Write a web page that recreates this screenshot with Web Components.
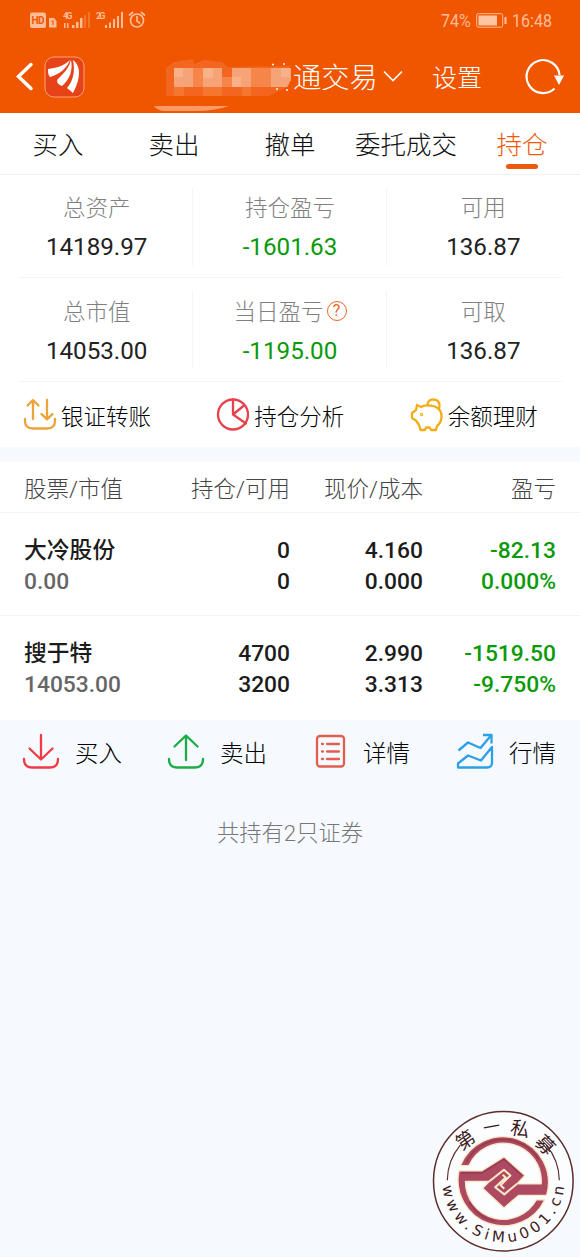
<!DOCTYPE html>
<html lang="zh-CN">
<head>
<meta charset="utf-8">
<title>持仓</title>
<style>
  body {
    margin: 0;
    background: #f6faff;
    font-family: Roboto, "Noto Sans CJK SC", sans-serif;
    color: #222;
  }
</style>
</head>
<body>
<trade-app></trade-app>

<script>
const ICONS = {
  transfer: `<g stroke="#eba33a"><path d="M9 20V1.500M3.500 6.500L9 1.200L14.500 6.500M23 1V20M17.500 15L23 20.300L28.500 15"/><path d="M1 20V22C1 27 4 29.500 9 29.500H23C28 29.500 31 27 31 22V20"/></g>`,
  pie: `<g stroke="#e8424e"><circle cx="16" cy="15.500" r="15"/><path d="M16 .500V15.500L29 24.500M16 15.500L27 6.500"/></g>`,
  pig: `<g stroke="#f3ad14"><path d="M16.500 6C16.500 2.500 19 .500 22 .500C26 .500 28.500 3 28.500 7C28.500 8.500 28 9.500 27.500 10"/><path d="M6 6L10 8C14 5.500 20 6.500 24 7.500C29 9.500 31 14 30.500 19C30 23 28 25.500 26 27L25 31H20L18.500 28.500H15L14 31H9.500L8 26L5 21.500L1 19V14L5 11Z"/><circle cx="10.500" cy="15.500" r=".5"/></g>`,
  buy: `<g stroke="#f03a45"><path d="M18 1V25M6.500 14.500L18 25.500L29.500 14.500"/><path d="M1 25C1 31 4 33.500 9 33.500H27C32 33.500 35 31 35 25"/></g>`,
  sell: `<g stroke="#1cac45"><path d="M18 26V2M6.500 12.500L18 1.500L29.500 12.500"/><path d="M1 25C1 31 4 33.500 9 33.500H27C32 33.500 35 31 35 25"/></g>`,
  detail: `<g stroke="#e25f50"><rect x="4" y="2" width="27" height="30.500" rx="3"/><path d="M9 10h1M14 10H26M9 17.500h1M14 17.500H26M9 25h1M14 25H26"/></g>`,
  quote: `<g stroke="#2ba0e8" stroke-linecap="butt"><path d="M.500 16.500L10 8.500L22.500 14L33 1.500M25 1H33.500V9.500"/><path d="M34 13L23 26.500L10 21.500L0 29.500V33.500H29C32.500 33.500 34 32 34 28.500Z"/></g>`
};

class TradeIcon extends HTMLElement {
  constructor() {
    super();
    this.attachShadow({ mode: "open" });
  }
  connectedCallback() {
    const size = this.getAttribute("size") || 32;
    this.shadowRoot.innerHTML = `
      <style>
        :host { display: block; flex: none; }
        svg { display: block; overflow: visible; fill: none; stroke-width: 2.3; stroke-linecap: round; stroke-linejoin: round; }
      </style>
      <svg width="${size}" height="${size}" viewBox="0 0 ${size} ${size}">${ICONS[this.getAttribute("name")]}</svg>`;
  }
}
customElements.define("trade-icon", TradeIcon);

class StatusBar extends HTMLElement {
  constructor() {
    super();
    this.attachShadow({ mode: "open" }).innerHTML = `
      <style>
        :host { display: flex; justify-content: space-between; height: 42px; padding: 0 26px 0 30px; color: #ffbd98; }
        svg { display: block; }
        .right { display: flex; font-size: 18px; line-height: 42px; }
        .pct { width: 35px; }
        .time { width: 42px; margin-left: 4px; }
        .right span span { display: inline-block; transform: scaleX(.89); transform-origin: 0 50%; }
        .signal { font: 700 9px "Roboto", sans-serif; }
      </style>
      <svg width="120" height="42" viewBox="0 0 120 42" fill="#ffbd98">
        <rect x="0" y="12.500" width="16" height="15.500" rx="2"/>
        <text x="1.500" y="24" font-size="10" font-weight="700" fill="#f05600" textLength="13">HD</text>
        <path d="M19 18h5l2.500 3v6.500h-7.500z"/>
        <path d="M21.500 21h1.500v4" fill="none" stroke="#f05600" stroke-width="1.200"/>
        <g class="signal">
          <text x="33" y="18.500" textLength="9.500">4G</text>
          <text x="66" y="18.500" textLength="9.500">2G</text>
        </g>
        <path d="M34 23h1.500v5H34zM37 23h1.500v5H37zM42 25h2.500v3H42zM46 22h2.500v6H46zM50 18h2.500v10H50z"/>
        <path d="M54 15h2v13h-2zM58 12h2v16h-2z" opacity=".3"/>
        <path d="M75 25h2v3h-2zM79 22.500h2v5.500h-2zM83 19h2v9h-2zM87 16h2v12h-2zM91 12h2v16h-2z"/>
        <g fill="none" stroke="#ffbd98" stroke-width="1.700" stroke-linecap="round">
          <circle cx="107" cy="20.500" r="6.500"/><path d="M107 16.500v4.500l2.500 2M99.500 15l3-2.500M114.500 15l-3-2.500"/>
        </g>
      </svg>
      <div class="right">
        <span class="pct"><span>74%</span></span>
        <svg width="32" height="42" viewBox="0 0 32 42">
          <rect x=".700" y="13.700" width="26" height="13.500" rx="1.500" fill="none" stroke="#ffbd98"/>
          <path d="M2.500 15.500h18.500v10H2.500zM28.500 17h2v7h-2z" fill="#ffc5a3"/>
        </svg>
        <span class="time"><span>16:48</span></span>
      </div>`;
  }
}
customElements.define("status-bar", StatusBar);

class TradeHeader extends HTMLElement {
  constructor() {
    super();
    this.attachShadow({ mode: "open" }).innerHTML = `
      <style>
        :host { display: block; height: 113px; background: #f05600; color: #fff; }
        nav { display: flex; align-items: center; height: 71px; font-weight: 300; }
        svg { display: block; flex: none; }
        .back { margin: -2px 0 0 15px; }
        .logo { margin: -2px 0 0 10px; }
        .mask { margin-left: 66px; }
        .title { font-size: 28.300px; line-height: 70px; width: 86px; margin-top: 2px; white-space: nowrap; }
        .arrow { margin: -2px 0 0 4px; }
        .set { font-size: 25px; line-height: 70px; margin: 2px 0 0 29px; width: 50px; white-space: nowrap; }
        .refresh { margin-left: 41px; }
      </style>
      <status-bar></status-bar>
      <nav>
        <svg class="back" width="19" height="30" viewBox="0 0 19 30"><path d="M16 2.500L3.500 14.500L16 26.500" fill="none" stroke="#fff" stroke-width="3.500" stroke-linecap="round"/></svg>
        <svg class="logo" width="41" height="42" viewBox="0 0 41 42">
          <rect x="1" y="1" width="39" height="40" rx="9" fill="#e64418" stroke="#ffa276"/>
          <path d="M4 13C12 12 20 10 26 4C23 12 16 18 6 21C4 19 4 16 4 13Z" fill="#fff"/>
          <path d="M13 25C13 22 24 16 27 4C29 14 26 23 18 30C15 29 13 27 13 25Z" fill="#fff"/>
          <path d="M29 4C36 9 38 20 29 37L23 32C30 24 31 14 29 4Z" fill="#fff"/>
        </svg>
        <svg class="mask" width="142" height="71" viewBox="151 42 142 71">
          <path d="M166 68l8-6 19-3 1 5 10-4 18 2 6 5 62-1-1 20-20 10H166z" fill="#f3661f"/>
          <path d="M174 68h19v19h-19zM203 68h19v19h-19zM232 68h19v19h-19zM271 68h20v12l-4 7h-16z" fill="#f7a378"/>
          <path d="M193 68h10v19h-10zM222 77h10v10h-10zM251 68h20v19h-20z" fill="#f58549"/>
          <path d="M203 68h10v10h-10zM232 77h9v10h-9zM174 68h9v9h-9zM281 68h9v9h-9z" fill="#f9b18a"/>
          <path d="M174 87h10v9h-10zM203 87h19v9h-19zM242 87h9v9h-9z" fill="#f4762f"/>
          <path d="M154 106H229Q215 111 195 111H163Q157 110 154 106Z" fill="#fa9a65"/>
          <path d="M272 64.500h2M283 64h2M276 89h2M286 90h2" stroke="#fff" stroke-width="1.500"/>
        </svg>
        <span class="title">通交易</span>
        <svg class="arrow" width="20" height="14" viewBox="0 0 20 14"><path d="M1 1.500L10 10.500L19 1.500" fill="none" stroke="#fff" stroke-width="1.600"/></svg>
        <span class="set">设置</span>
        <svg class="refresh" width="42" height="40" viewBox="0 0 42 40">
          <path d="M31.500 30.500A16.500 16.500 0 1 1 36.500 17" fill="none" stroke="#fff" stroke-width="2.200"/>
          <path d="M31 17.500H41L36 27Z" fill="#fff"/>
        </svg>
      </nav>`;
  }
}
customElements.define("trade-header", TradeHeader);

class TradeTab extends HTMLElement {
  constructor() {
    super();
    this.attachShadow({ mode: "open" }).innerHTML = `
      <style>
        :host { display: flex; flex-direction: column; align-items: center; width: 116px; font-size: 25.500px; font-weight: 300; line-height: 52px; padding-top: 6px; box-sizing: border-box; white-space: nowrap; color: #111; }
        :host([active]) { color: #ec5a10; }
        i { display: none; width: 32px; height: 5px; border-radius: 3px; margin-top: -7px; background: #ec5a10; }
        :host([active]) i { display: block; }
      </style>
      <slot></slot><i></i>`;
  }
}
customElements.define("trade-tab", TradeTab);

class StatCell extends HTMLElement {
  constructor() {
    super();
    this.attachShadow({ mode: "open" }).innerHTML = `
      <style>
        :host { display: block; height: 103px; padding-top: 17px; box-sizing: border-box; text-align: center; color: #222; }
        .label { display: flex; justify-content: center; align-items: center; gap: 3px; font-size: 22.500px; font-weight: 300; line-height: 32px; color: #808080; }
        .num { font-size: 24.200px; line-height: 47px; }
        :host([down]) .num { color: #0a9a0a; }
      </style>
      <div class="label"><slot name="label"></slot><slot name="hint"></slot></div>
      <div class="num"><slot></slot></div>`;
  }
}
customElements.define("stat-cell", StatCell);

class HelpMark extends HTMLElement {
  constructor() {
    super();
    this.attachShadow({ mode: "open" }).innerHTML = `
      <style>
        :host { display: flex; align-items: center; justify-content: center; width: 20px; height: 20px; box-sizing: border-box; border: 1.500px solid #ec6529; border-radius: 50%; color: #ec6529; font-size: 16px; font-weight: 400; line-height: 18px; margin-top: -2px; }
      </style>
      <slot></slot>`;
  }
}
customElements.define("help-mark", HelpMark);

class IconLink extends HTMLElement {
  constructor() {
    super();
    this.attachShadow({ mode: "open" });
  }
  connectedCallback() {
    this.shadowRoot.innerHTML = `
      <style>
        :host { display: flex; align-items: center; gap: var(--link-gap, 5px); font-size: var(--link-size, 22.500px); font-weight: 300; color: #000; white-space: nowrap; }
      </style>
      <trade-icon name="${this.getAttribute("icon")}" size="${this.getAttribute("size") || 32}"></trade-icon>
      <span><slot></slot></span>`;
  }
}
customElements.define("icon-link", IconLink);

class HoldingRow extends HTMLElement {
  constructor() {
    super();
    this.attachShadow({ mode: "open" }).innerHTML = `
      <style>
        :host { display: grid; grid-template-columns: repeat(4, 133px); grid-auto-rows: 30.500px; height: 103px; padding: 23px 24px 0; box-sizing: border-box; background: #fff; border-bottom: 1px solid #f3f4f6; font-size: 22.800px; font-weight: 500; line-height: 30.500px; color: #1c1c1c; }
        :host(:last-of-type) { height: 104px; border-bottom: 0; }
        ::slotted(*) { text-align: right; white-space: nowrap; }
        ::slotted(:nth-child(4n + 1)) { text-align: left; }
        ::slotted(:nth-child(4n)) { color: #0a9a0a; }
        ::slotted(:nth-child(5)) { color: #666; }
      </style>
      <slot></slot>`;
  }
}
customElements.define("holding-row", HoldingRow);

class SiteSeal extends HTMLElement {
  constructor() {
    super();
    this.attachShadow({ mode: "open" }).innerHTML = `
      <style>
        :host { display: block; position: absolute; left: 432px; top: 1110px; }
        svg { display: block; overflow: visible; }
        text { fill: #3d1c1c; }
        .cn { font: 400 19px "Noto Sans CJK SC", sans-serif; text-anchor: middle; }
        .url { font: 400 15px "DejaVu Sans", sans-serif; }
      </style>
      <svg width="142" height="142" viewBox="-71.300 -71.200 142 142">
        <circle r="69.800" fill="#fcfdff" stroke="#5a2d2a" stroke-width="1.500"/>
        <g fill="none" stroke="#5a2d2a" stroke-width="1.200">
          <path d="M-56 -1A56 56 0 0 1 -43 -36M56 -1A56 56 0 0 0 43 -36"/>
        </g>
        <g class="cn">
          <text transform="translate(-38 -41.500) rotate(-35)" y="7">第</text>
          <text transform="translate(-12 -55) rotate(-10)" y="7" font-size="17">一</text>
          <text transform="translate(17 -52.500) rotate(12)" y="7">私</text>
          <text transform="translate(42 -36.500) rotate(45)" y="7">募</text>
        </g>
        <path id="arc" d="M-61 0A61 61 0 0 0 61 0" fill="none"/>
        <text class="url"><textPath href="#arc" startOffset="5" textLength="181">www.SiMu001.cn</textPath></text>
        <g transform="scale(.338) translate(-145 -139)" fill="#ad4960" stroke="#fbe8c6" stroke-width="4" stroke-linejoin="round">
          <path d="M18 93A135 135 0 0 1 273 181H190L147 218L84 160L103 140H33A112 112 0 0 0 243 194H268A135 135 0 0 1 14 108H82L147 67L209 122L185 147H257A112 112 0 0 0 43 93Z"/>
          <path d="M103 140L147 105L166 122L137 151L148 161M185 147L148 178L121 157L152 128L143 120" fill="none" stroke-width="6"/>
          <path d="M36 82A122 122 0 0 1 250 76M20 114H84L147 74L200 122M43 200A122 122 0 0 0 120 258" fill="none" stroke="#702b3d" stroke-width="4" opacity=".45"/>
        </g>
      </svg>`;
  }
}
customElements.define("site-seal", SiteSeal);

class TradeApp extends HTMLElement {
  constructor() {
    super();
    this.attachShadow({ mode: "open" }).innerHTML = `
      <style>
        :host { display: block; position: relative; width: 580px; height: 1257px; background: #f6faff; }
        .tabs { display: flex; height: 62px; box-sizing: border-box; background: #fff; border-bottom: 1px solid #f1f1f1; }
        .stats { display: grid; grid-template-columns: repeat(3, 1fr); padding: 0 0 1px; background: #fff; }
        stat-cell { background: linear-gradient(#f5f5f5, #f5f5f5) 100% 13px / 1px 78px no-repeat, linear-gradient(#f5f5f5, #f5f5f5) 0 100% / 100% 1px no-repeat; }
        stat-cell:nth-child(3n + 1) { background: linear-gradient(#f5f5f5, #f5f5f5) 100% 13px / 1px 78px no-repeat, linear-gradient(#f5f5f5, #f5f5f5) 100% 100% / 91% 1px no-repeat; }
        stat-cell:nth-child(3n) { background: linear-gradient(#f5f5f5, #f5f5f5) 0 100% / 91% 1px no-repeat; }
        .stats stat-cell:nth-child(n + 4) { height: 104px; padding-top: 18px; }
        .links { display: grid; grid-template-columns: repeat(3, 1fr); height: 64px; background: #fff; }
        .links icon-link { padding-left: 24px; }
        .head { display: grid; grid-template-columns: repeat(4, 133px); height: 51px; margin-top: 15px; padding: 0 24px; box-sizing: border-box; background: #fff; border-bottom: 1px solid #f1f3f5; font-size: 22.500px; font-weight: 300; line-height: 55px; color: #444; text-align: right; }
        .head :first-child { text-align: left; }
        .ops { display: grid; grid-template-columns: repeat(4, 145px); height: 64px; padding-left: 23px; --link-gap: 16px; --link-size: 23.500px; }
        .ops [icon="detail"] { --link-gap: 14px; }
        .ops [icon="quote"] { --link-gap: 15px; }
        .total { margin-top: 27px; text-align: center; font-size: 22.300px; font-weight: 300; line-height: 45px; color: #777; }
      </style>
      <trade-header></trade-header>
      <div class="tabs">
        <trade-tab>买入</trade-tab>
        <trade-tab>卖出</trade-tab>
        <trade-tab>撤单</trade-tab>
        <trade-tab>委托成交</trade-tab>
        <trade-tab active>持仓</trade-tab>
      </div>
      <div class="stats">
        <stat-cell><span slot="label">总资产</span>14189.97</stat-cell>
        <stat-cell down><span slot="label">持仓盈亏</span>-1601.63</stat-cell>
        <stat-cell><span slot="label">可用</span>136.87</stat-cell>
        <stat-cell><span slot="label">总市值</span>14053.00</stat-cell>
        <stat-cell down><span slot="label">当日盈亏</span><help-mark slot="hint">?</help-mark>-1195.00</stat-cell>
        <stat-cell><span slot="label">可取</span>136.87</stat-cell>
      </div>
      <div class="links">
        <icon-link icon="transfer">银证转账</icon-link>
        <icon-link icon="pie">持仓分析</icon-link>
        <icon-link icon="pig">余额理财</icon-link>
      </div>
      <div class="head"><span>股票/市值</span><span>持仓/可用</span><span>现价/成本</span><span>盈亏</span></div>
      <holding-row>
        <span>大冷股份</span><span>0</span><span>4.160</span><span>-82.13</span>
        <span>0.00</span><span>0</span><span>0.000</span><span>0.000%</span>
      </holding-row>
      <holding-row>
        <span>搜于特</span><span>4700</span><span>2.990</span><span>-1519.50</span>
        <span>14053.00</span><span>3200</span><span>3.313</span><span>-9.750%</span>
      </holding-row>
      <div class="ops">
        <icon-link icon="buy" size="36">买入</icon-link>
        <icon-link icon="sell" size="36">卖出</icon-link>
        <icon-link icon="detail" size="36">详情</icon-link>
        <icon-link icon="quote" size="36">行情</icon-link>
      </div>
      <div class="total">共持有2只证券</div>
      <site-seal></site-seal>`;
  }
}
customElements.define("trade-app", TradeApp);
</script>
</body>
</html>
